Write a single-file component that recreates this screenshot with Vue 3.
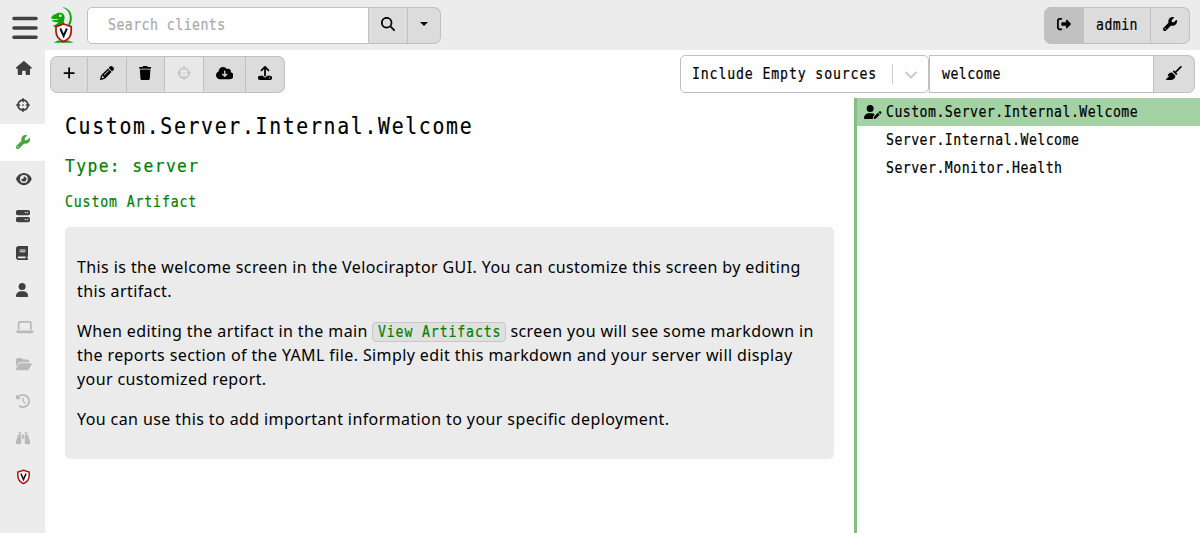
<script setup>
const icons = {
  home: { w: 576, d: 'M575.8 255.5c0 18-15 32.1-32 32.1h-32l.7 160.2c0 2.7-.2 5.4-.5 8.1V472c0 22.1-17.9 40-40 40H392c-22.1 0-40-17.9-40-40V384c0-17.7-14.3-32-32-32H256c-17.7 0-32 14.3-32 32v88c0 22.1-17.9 40-40 40H104c-22.1 0-40-17.9-40-40V287.6H32c-18 0-32-14-32-32.1c0-9 3-17 10-24L266.4 8c7-7 15-8 22-8s15 2 21 7L564.8 231.5c8 7 12 15 11 24z' },
  target: { w: 512, d: 'M256 0c17.7 0 32 14.3 32 32V42.4c93.7 13.9 167.7 88 181.6 181.6H480c17.7 0 32 14.3 32 32s-14.3 32-32 32H469.6c-13.9 93.7-88 167.7-181.6 181.6V480c0 17.7-14.3 32-32 32s-32-14.3-32-32V469.6C130.3 455.7 56.3 381.7 42.4 288H32c-17.7 0-32-14.3-32-32s14.3-32 32-32H42.4C56.3 130.3 130.3 56.3 224 42.4V32c0-17.7 14.3-32 32-32zM107.4 288c12.5 58.3 58.4 104.1 116.6 116.6V384c0-17.7 14.3-32 32-32s32 14.3 32 32v20.6c58.3-12.5 104.1-58.4 116.6-116.6H384c-17.7 0-32-14.3-32-32s14.3-32 32-32h20.6C392.1 165.7 346.3 119.9 288 107.4V128c0 17.7-14.3 32-32 32s-32-14.3-32-32V107.4C165.7 119.9 119.9 165.7 107.4 224H128c17.7 0 32 14.3 32 32s-14.3 32-32 32H107.4zM256 224a32 32 0 1 1 0 64 32 32 0 1 1 0-64z' },
  wrench: { w: 512, d: 'M352 320c88.4 0 160-71.6 160-160c0-15.3-2.2-30.1-6.2-44.2c-3.1-10.8-16.4-13.2-24.3-5.3l-76.8 76.8c-3 3-7.1 4.7-11.3 4.7H336c-8.8 0-16-7.2-16-16V118.6c0-4.2 1.7-8.3 4.7-11.3l76.8-76.8c7.9-7.9 5.4-21.2-5.3-24.3C382.1 2.2 367.3 0 352 0C263.6 0 192 71.6 192 160c0 19.1 3.4 37.5 9.5 54.5L19.9 396.1C7.2 408.8 0 426.1 0 444.1C0 481.6 30.4 512 67.9 512c18 0 35.3-7.2 48-19.9L297.5 310.5c17 6.2 35.4 9.5 54.5 9.5zM80 408a24 24 0 1 1 0 48 24 24 0 1 1 0-48z' },
  eye: { w: 576, d: 'M288 32c-80.8 0-145.5 36.8-192.6 80.6C48.6 156 17.3 208 2.5 243.7c-3.3 7.9-3.3 16.7 0 24.6C17.3 304 48.6 356 95.4 399.4C142.5 443.2 207.2 480 288 480s145.5-36.8 192.6-80.6c46.8-43.5 78.1-95.4 93-131.1c3.3-7.9 3.3-16.7 0-24.6c-14.9-35.7-46.2-87.7-93-131.1C433.5 68.8 368.8 32 288 32zM144 256a144 144 0 1 1 288 0 144 144 0 1 1 -288 0zm144-64c0 35.3-28.7 64-64 64c-7.1 0-13.9-1.2-20.3-3.3c-5.5-1.8-11.9 1.6-11.7 7.4c.3 6.9 1.3 13.8 3.2 20.7c13.7 51.2 66.4 81.6 117.6 67.9s81.6-66.4 67.9-117.6c-11.1-41.5-47.8-69.4-88.6-71.1c-5.8-.2-9.2 6.1-7.4 11.7c2.1 6.4 3.3 13.2 3.3 20.3z' },
  server: { w: 512, d: 'M64 32C28.7 32 0 60.7 0 96v64c0 35.3 28.7 64 64 64H448c35.3 0 64-28.7 64-64V96c0-35.3-28.7-64-64-64H64zm280 72a24 24 0 1 1 0 48 24 24 0 1 1 0-48zm48 24a24 24 0 1 1 48 0 24 24 0 1 1 -48 0zM64 288c-35.3 0-64 28.7-64 64v64c0 35.3 28.7 64 64 64H448c35.3 0 64-28.7 64-64V352c0-35.3-28.7-64-64-64H64zm280 72a24 24 0 1 1 0 48 24 24 0 1 1 0-48zm56 24a24 24 0 1 1 48 0 24 24 0 1 1 -48 0z' },
  book: { w: 448, d: 'M96 0C43 0 0 43 0 96V416c0 53 43 96 96 96H384h32c17.7 0 32-14.3 32-32s-14.3-32-32-32V384c17.7 0 32-14.3 32-32V32c0-17.7-14.3-32-32-32H384 96zm0 384H352v64H96c-17.7 0-32-14.3-32-32s14.3-32 32-32zm32-240c0-8.8 7.2-16 16-16H336c8.8 0 16 7.2 16 16s-7.2 16-16 16H144c-8.8 0-16-7.2-16-16zm16 48H336c8.8 0 16 7.2 16 16s-7.2 16-16 16H144c-8.8 0-16-7.2-16-16s7.2-16 16-16z' },
  user: { w: 448, d: 'M224 256A128 128 0 1 0 224 0a128 128 0 1 0 0 256zm-45.7 48C79.8 304 0 383.8 0 482.3C0 498.7 13.3 512 29.7 512H418.3c16.4 0 29.7-13.3 29.7-29.7C448 383.8 368.2 304 269.7 304H178.3z' },
  laptop: { w: 640, d: 'M128 32C92.7 32 64 60.7 64 96V352h64V96H512V352h64V96c0-35.3-28.7-64-64-64H128zM19.2 384C8.6 384 0 392.6 0 403.2C0 445.6 34.4 480 76.8 480H563.2c42.4 0 76.8-34.4 76.8-76.8c0-10.6-8.6-19.2-19.2-19.2H19.2z' },
  folder: { w: 576, d: 'M88.7 223.8L0 375.8V96C0 60.7 28.7 32 64 32H181.5c17 0 33.3 6.7 45.3 18.7l26.5 26.5c12 12 28.3 18.7 45.3 18.7H416c35.3 0 64 28.7 64 64v32H144c-22.8 0-43.8 12.1-55.3 31.8zm27.6 16.1C122.1 230 132.6 224 144 224H544c11.5 0 22 6.1 27.7 16.1s5.7 22.2-.1 32.1l-112 192C453.9 474 443.4 480 432 480H32c-11.5 0-22-6.1-27.7-16.1s-5.7-22.2 .1-32.1l112-192z' },
  history: { w: 512, d: 'M75 75L41 41C25.9 25.9 0 36.6 0 57.9V168c0 13.3 10.7 24 24 24H134.1c21.4 0 32.1-25.9 17-41l-30.8-30.8C155 85.5 203 64 256 64c106 0 192 86 192 192s-86 192-192 192c-40.8 0-78.6-12.7-109.7-34.4c-14.5-10.1-34.4-6.6-44.6 7.9s-6.6 34.4 7.9 44.6C151.2 495 201.7 512 256 512c141.4 0 256-114.6 256-256S397.4 0 256 0C185.3 0 121.3 28.7 75 75zm181 53c-13.3 0-24 10.7-24 24V256c0 6.4 2.5 12.5 7 17l72 72c9.4 9.4 24.6 9.4 33.9 0s9.4-24.6 0-33.9l-65-65V152c0-13.3-10.7-24-24-24z' },
  binoculars: { w: 512, d: 'M128 32h32c17.7 0 32 14.3 32 32V96H96V64c0-17.7 14.3-32 32-32zm64 96V448c0 17.7-14.3 32-32 32H32c-17.7 0-32-14.3-32-32V388.9c0-34.6 9.4-68.6 27.2-98.3C40.9 267.8 49.7 242.4 53 216L60.5 156c2-16 15.6-28 31.8-28H192zm227.8 0c16.1 0 29.8 12 31.8 28L459 216c3.3 26.4 12.1 51.8 25.8 74.6c17.8 29.7 27.2 63.7 27.2 98.3V448c0 17.7-14.3 32-32 32H352c-17.7 0-32-14.3-32-32V128h99.8zM320 64c0-17.7 14.3-32 32-32h32c17.7 0 32 14.3 32 32V96H320V64zm-32 64V288H224V128h64z' },
  search: { w: 512, d: 'M416 208c0 45.9-14.9 88.3-40 122.7L502.6 457.4c12.5 12.5 12.5 32.8 0 45.3s-32.8 12.5-45.3 0L330.7 376c-34.4 25.2-76.8 40-122.7 40C93.1 416 0 322.9 0 208S93.1 0 208 0S416 93.1 416 208zM208 352a144 144 0 1 0 0-288 144 144 0 1 0 0 288z' },
  plus: { w: 448, d: 'M256 80c0-17.7-14.3-32-32-32s-32 14.3-32 32V224H48c-17.7 0-32 14.3-32 32s14.3 32 32 32H192V432c0 17.7 14.3 32 32 32s32-14.3 32-32V288H400c17.7 0 32-14.3 32-32s-14.3-32-32-32H256V80z' },
  pencil: { w: 512, d: 'M410.3 231l11.3-11.3-33.9-33.9-62.1-62.1L291.7 89.8l-11.3 11.3-22.6 22.6L58.6 322.9c-10.4 10.4-18 23.3-22.2 37.4L1 480.7c-2.5 8.4-.2 17.5 6.1 23.7s15.3 8.5 23.7 6.1l120.3-35.4c14.1-4.2 27-11.8 37.4-22.2L387.7 253.7 410.3 231zM160 399.4l-9.1 22.7c-4 3.1-8.5 5.4-13.3 6.9L59.4 452l23-78.1c1.4-4.9 3.8-9.4 6.9-13.3l22.7-9.1v32c0 8.8 7.2 16 16 16h32zM362.7 18.7L348.3 33.2 325.7 55.8 314.3 67.1l33.9 33.9 62.1 62.1 33.9 33.9 11.3-11.3 22.6-22.6 14.5-14.5c25-25 25-65.5 0-90.5L453.3 18.7c-25-25-65.5-25-90.5 0zm-47.4 168l-144 144c-6.2 6.2-16.4 6.2-22.6 0s-6.2-16.4 0-22.6l144-144c6.2-6.2 16.4-6.2 22.6 0s6.2 16.4 0 22.6z' },
  trash: { w: 448, d: 'M135.2 17.7L128 32H32C14.3 32 0 46.3 0 64S14.3 96 32 96H416c17.7 0 32-14.3 32-32s-14.3-32-32-32H320l-7.2-14.3C307.4 6.8 296.3 0 284.2 0H163.8c-12.1 0-23.2 6.8-28.6 17.7zM416 128H32L53.2 467c1.6 25.3 22.6 45 47.9 45H346.9c25.3 0 46.3-19.7 47.9-45L416 128z' },
  cloud: { w: 640, d: 'M144 480C64.5 480 0 415.5 0 336c0-62.8 40.2-116.2 96.2-135.9c-.1-2.7-.2-5.4-.2-8.1c0-88.4 71.6-160 160-160c59.3 0 111 32.2 138.7 80.2C409.9 102 428.3 96 448 96c53 0 96 43 96 96c0 12.2-2.3 23.8-6.4 34.6C596 238.4 640 290.1 640 352c0 70.7-57.3 128-128 128H144zm79-167l80 80c9.4 9.4 24.6 9.4 33.9 0l80-80c9.4-9.4 9.4-24.6 0-33.9s-24.6-9.4-33.9 0l-39 39V184c0-13.3-10.7-24-24-24s-24 10.7-24 24V318.1l-39-39c-9.4-9.4-24.6-9.4-33.9 0s-9.4 24.6 0 33.9z' },
  upload: { w: 512, d: 'M288 109.3V352c0 17.7-14.3 32-32 32s-32-14.3-32-32V109.3l-73.4 73.4c-12.5 12.5-32.8 12.5-45.3 0s-12.5-32.8 0-45.3l128-128c12.5-12.5 32.8-12.5 45.3 0l128 128c12.5 12.5 12.5 32.8 0 45.3s-32.8 12.5-45.3 0L288 109.3zM64 352H192c0 35.3 28.7 64 64 64s64-28.7 64-64H448c35.3 0 64 28.7 64 64v32c0 35.3-28.7 64-64 64H64c-35.3 0-64-28.7-64-64V416c0-35.3 28.7-64 64-64zM432 456a24 24 0 1 0 0-48 24 24 0 1 0 0 48z' },
  logout: { w: 512, d: 'M160 32H96C43 32 0 75 0 128V384c0 53 43 96 96 96h64c17.700 0 32-14.300 32-32s-14.300-32-32-32H96c-17.700 0-32-14.300-32-32V128c0-17.700 14.300-32 32-32h64c17.700 0 32-14.300 32-32s-14.300-32-32-32zM502.600 278.600c12.500-12.500 12.500-32.800 0-45.300L369 105c-15-15-41-5-41 17v70H192c-18 0-32 14-32 32v64c0 18 14 32 32 32H328v70c0 22 26 32 41 17z' },
  broom: { w: 576, d: 'M566.600 54.600c12.500-12.500 12.500-32.800 0-45.300s-32.800-12.500-45.300 0l-192 192-34.700-34.700c-4.200-4.200-10-6.600-16-6.600c-12.500 0-22.600 10.100-22.600 22.600v29.100L364.300 320h29.100c12.500 0 22.600-10.100 22.600-22.600c0-6-2.400-11.800-6.600-16l-34.700-34.700 192-192zM341.100 353.400L222.600 234.900c-42.700-3.700-85.200 11.700-115.800 42.300l-8 8C76.500 307.500 64 337.700 64 369.200c0 6.800 7.100 11.200 13.200 8.200l51.100-25.500c5-2.500 9.500 4.100 5.400 7.900L7.300 473.400C2.700 477.600 0 483.600 0 489.900C0 502.100 9.900 512 22.100 512l173.300 0c38.800 0 75.900-15.400 103.400-42.800c30.600-30.600 45.900-73.100 42.300-115.800z' },
  userpen: { w: 640, d: 'M224 256A128 128 0 1 0 224 0a128 128 0 1 0 0 256zm-45.700 48C79.800 304 0 383.800 0 482.300C0 498.700 13.300 512 29.700 512H322.800c-3.100-8.800-3.700-18.400-1.400-27.800l15-60.100c2.800-11.300 8.600-21.500 16.800-29.700l40.300-40.300c-32.100-31-75.700-50.100-123.900-50.100H178.300zm435.500-68.300c-15.600-15.600-40.900-15.600-56.600 0l-29.400 29.400 71 71 29.400-29.400c15.600-15.600 15.600-40.900 0-56.600l-14.400-14.400zM375.900 417c-4.100 4.100-7 9.200-8.400 14.900l-15 60.100c-1.400 5.500 .2 11.200 4.200 15.200s9.700 5.600 15.200 4.200l60.100-15c5.600-1.400 10.800-4.300 14.900-8.400L576.100 358.700l-71-71L375.900 417z' },
}
const nav = [
  { icon: 'home' }, { icon: 'target' }, { icon: 'wrench', on: true }, { icon: 'eye' },
  { icon: 'server' }, { icon: 'book' }, { icon: 'user' },
  { icon: 'laptop', off: true }, { icon: 'folder', off: true },
  { icon: 'history', off: true }, { icon: 'binoculars', off: true },
]
const tools = ['plus', 'pencil', 'trash', 'target', 'cloud', 'upload']
const artifacts = ['Custom.Server.Internal.Welcome', 'Server.Internal.Welcome', 'Server.Monitor.Health']
const box = (n) => `0 0 ${icons[n].w} 512`
</script>

<template>
  <div class="app">
    <header class="top">
      <svg class="burger" viewBox="0 0 26 24" width="26" height="24"><path d="M2 2.500H24M2 12H24M2 21.300H24" /></svg>
      <svg class="logo" viewBox="0 0 24 38" width="24" height="38">
        <path d="M12.500 .3C18 .8 21.800 5 21.800 11C21.800 14 21 16.500 19.500 18.500L18 17.500C19.500 15 20.200 12 19.700 8.500C19 4.500 16.500 2 12.500 .3Z" fill="#0ba50b" />
        <path d="M1.300 10.500C2 8.500 4 7.500 5.500 7.200C7 5.500 11.500 5 13.500 7.200C15 8.800 14.800 11.500 14 13.500C13.500 15.500 14 16.500 15.500 17.500L6 19.500L4 20L3 18.800L6 17.500L8.500 15.200C5.500 15.600 2.500 14.500 1.300 13.300L8 13.100V12.300L1.300 11.700Z" fill="#0ba50b" />
        <circle cx="10.300" cy="8.700" r="1.300" fill="#fff" />
        <path d="M3.500 35.800L8 33.500H18.500L23.700 35.800Z" fill="#0ba50b" />
        <path d="M13.600 17L21.200 19.600V24.500C21.200 29.500 18 32.700 13.600 34.600C9.200 32.700 6 29.500 6 24.500V19.600Z" fill="#fff" stroke="#b90e0e" stroke-width="1.700" />
        <path d="M10.300 21.500L13.600 29L16.900 21.500" fill="none" stroke="#111" stroke-width="2" />
      </svg>
      <div class="search">
        <div class="field"><span class="mono pale">Search clients</span></div>
        <div class="btn find"><svg class="ico" :viewBox="box('search')"><path :d="icons.search.d" /></svg></div>
        <div class="btn drop"><i class="caret"></i></div>
      </div>
      <div class="account">
        <div class="btn out"><svg class="ico" :viewBox="box('logout')"><path :d="icons.logout.d" /></svg></div>
        <div class="btn name"><span class="mono">admin</span></div>
        <div class="btn cfg"><svg class="ico" :viewBox="box('wrench')"><path :d="icons.wrench.d" /></svg></div>
      </div>
    </header>

    <div class="body">
      <nav class="side">
        <div v-for="n in nav" :key="n.icon" class="item" :class="{ on: n.on, off: n.off }">
          <svg class="ico" :viewBox="box(n.icon)"><path :d="icons[n.icon].d" /></svg>
        </div>
        <div class="item">
          <svg class="shield" viewBox="0 0 15 16" width="15" height="16">
            <path d="M7.500 1.200L13.200 3.100V6.500C13.200 10.500 11 13 7.500 14.700C4 13 1.800 10.500 1.800 6.500V3.100Z" fill="#fff" stroke="#b51212" stroke-width="1.500" />
            <path d="M5 4.600L7.500 10.500L10 4.600" fill="none" stroke="#111" stroke-width="1.500" />
          </svg>
        </div>
      </nav>

      <main class="main">
        <div class="bar">
          <div class="tools">
            <div v-for="(t, i) in tools" :key="t" class="btn" :class="'t' + i">
              <svg class="ico" :viewBox="box(t)"><path :d="icons[t].d" /></svg>
            </div>
          </div>
          <div class="filter">
            <div class="select">
              <span class="mono wide">Include Empty sources</span>
              <i class="sep"></i>
              <svg class="chev" viewBox="0 0 14 10" width="14" height="10"><path d="M2 2.500L7 7.500L12 2.500" /></svg>
            </div>
            <div class="term"><span class="mono">welcome</span></div>
            <div class="btn clear"><svg class="ico" :viewBox="box('broom')"><path :d="icons.broom.d" /></svg></div>
          </div>
        </div>

        <div class="panes">
          <section class="report">
            <h1><span class="mono">Custom.Server.Internal.Welcome</span></h1>
            <h2><span class="mono">Type: server</span></h2>
            <h3><span class="mono wide">Custom Artifact</span></h3>
            <article class="card">
              <p>This is the welcome screen in the Velociraptor GUI. You can customize this screen by editing<br>this artifact.</p>
              <p>When editing the artifact in the main <code><span class="mono wide">View Artifacts</span></code> screen you will see some markdown in<br>the reports section of the YAML file. Simply edit this markdown and your server will display<br>your customized report.</p>
              <p>You can use this to add important information to your specific deployment.</p>
            </article>
          </section>
          <aside class="list">
            <div v-for="(a, i) in artifacts" :key="a" class="row" :class="{ sel: i === 0 }">
              <span class="mark"><svg v-if="i === 0" class="ico" :viewBox="box('userpen')"><path :d="icons.userpen.d" /></svg></span>
              <span class="mono">{{ a }}</span>
            </div>
          </aside>
        </div>
      </main>
    </div>
  </div>
</template>

<style>
body { margin: 0; overflow: hidden; }
</style>

<style scoped>
* { box-sizing: border-box; }
.app { width: 1200px; height: 533px; background: #fefefe; color: #000; font-family: "Noto Sans", sans-serif; display: flex; flex-direction: column; overflow: hidden; }
.mono { display: inline-block; font: 15px/20px "DejaVu Sans Mono", monospace; letter-spacing: .520px; transform: scaleX(.88); transform-origin: 0 50%; white-space: nowrap; -webkit-text-stroke: .2px currentColor; }
.mono.wide { letter-spacing: .980px; }
.pale { color: #aaa; }
.ico { height: 14px; width: auto; fill: currentColor; display: block; flex: none; }
.btn { background: #dcdcdc; border: 1px solid #c0c0c0; border-left-width: 0; display: flex; align-items: center; flex: none; }
.btn .ico { margin: 0 auto 3px; }

.top { height: 50px; flex: none; background: #ececec; display: flex; align-items: flex-start; }
.burger { margin: 16px 0 0 12px; fill: none; stroke: #404040; stroke-width: 3.600; stroke-linecap: round; }
.logo { margin: 7px 0 0 12px; }
.search { display: flex; height: 37px; margin: 7px 0 0 13px; }
.field { width: 282px; border: 1px solid #c0c0c0; border-radius: 5px 0 0 5px; background: #fefefe; display: flex; align-items: center; padding: 0 0 2px 20px; }
.find { width: 39px; }
.drop { width: 33px; border-radius: 0 7px 7px 0; justify-content: center; }
.caret { border: 4px solid transparent; border-top-color: #000; border-bottom: 0; margin-bottom: 4px; }
.account { display: flex; height: 37px; margin: 7px 10px 0 auto; }
.out { width: 40px; background: #c1c1c1; border-radius: 7px 0 0 7px; }
.name { width: 67px; padding: 0 0 2px 12px; }
.cfg { width: 39px; border-radius: 0 7px 7px 0; }

.body { flex: 1; display: flex; min-height: 0; }
.side { width: 45px; flex: none; background: #ececec; }
.item { height: 37px; padding: 11px 0 0 16px; color: #404040; }
.item.on { background: #fefefe; color: #46a346; }
.item.off { color: #b9b9b9; }
.main { flex: 1; display: flex; flex-direction: column; min-width: 0; }
.bar { height: 48px; flex: none; display: flex; justify-content: space-between; padding: 5px 5px 0; }
.tools { display: flex; height: 37px; margin-top: 1px; }
.tools .btn { width: 39px; }
.tools .t0 { width: 38px; border-left-width: 1px; border-radius: 7px 0 0 7px; }
.tools .t2 { width: 38px; }
.tools .t3 { background: #e8e8e8; color: #c8c8c8; }
.tools .t4 { width: 42px; }
.tools .t5 { border-radius: 0 7px 7px 0; }
.filter { display: flex; height: 38px; }
.select { width: 249px; position: relative; border: 1px solid #c0c0c0; border-radius: 5px; display: flex; align-items: center; padding-left: 11px; }
.sep { width: 1px; height: 20px; background: #ccc; position: absolute; left: 211px; top: 8px; }
.chev { position: absolute; left: 223px; top: 14px; fill: none; stroke: #ccc; stroke-width: 2; stroke-linecap: round; }
.term { width: 225px; border: 1px solid #c0c0c0; display: flex; align-items: center; padding-left: 12px; }
.clear { width: 41px; border-radius: 0 7px 7px 0; }

.panes { flex: 1; display: flex; min-height: 0; }
.report { flex: 1; padding: 0 20px; min-width: 0; }
h1, h2, h3, p { margin: 0; font-weight: 400; }
h1 { height: 55px; padding-top: 12px; }
h1 .mono { display: block; font-size: 22.500px; line-height: 32px; letter-spacing: 1.920px; }
h2 { height: 37px; color: #008000; }
h2 .mono { display: block; font-size: 18.500px; line-height: 26px; letter-spacing: 1.600px; }
h3 { height: 37px; color: #008000; }
h3 .mono { display: block; line-height: 24px; }
.card { width: 769px; height: 232px; background: #ebebeb; border-radius: 5px; padding: 28px 12px; font-size: 16px; line-height: 24px; letter-spacing: .4px; white-space: nowrap; }
.card p + p { margin-top: 16px; }
code { display: inline-block; width: 134px; height: 20px; border: 1px solid #c8c8c8; border-radius: 4px; background: #e0e0e0; color: #008000; padding-left: 5px; vertical-align: top; margin: 3px -.5px 0 0; line-height: 18px; }
code .mono { display: block; line-height: 18px; }
.list { width: 346px; flex: none; border-left: 3px solid #83bf83; }
.row { height: 28px; display: flex; align-items: center; padding-left: 7px; }
.row.sel { background: #a5d2a5; }
.mark { width: 22px; flex: none; }
</style>
